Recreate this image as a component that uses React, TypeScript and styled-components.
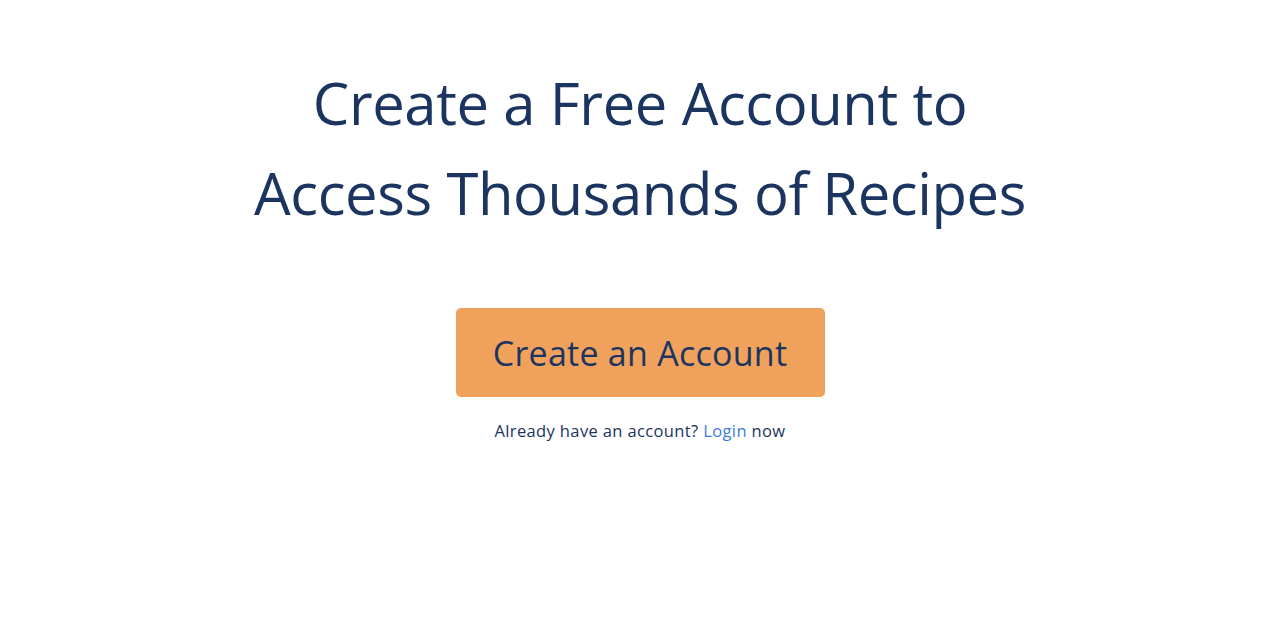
import React from "react";
import styled, { createGlobalStyle } from "styled-components";

const Global = createGlobalStyle`
  html, body { margin: 0; padding: 0; background: #ffffff; }
  body { font-family: "Open Sans", "Noto Sans", sans-serif; }
`;

const Page = styled.main`
  display: flex;
  flex-direction: column;
  align-items: center;
  padding-top: 58px;
  width: 1280px;
  height: 640px;
  box-sizing: border-box;
`;

const Heading = styled.h1`
  margin: 0;
  font-family: "Open Sans", sans-serif;
  font-weight: 400;
  font-size: 58px;
  line-height: 90px;
  color: #1b3560;
  text-align: center;
  letter-spacing: -0.4px;
`;

const CtaButton = styled.button`
  margin-top: 70px;
  width: 369px;
  height: 89px;
  border: none;
  border-radius: 5px;
  background: #f0a15b;
  color: #1b3560;
  font-family: "Open Sans", sans-serif;
  font-size: 34px;
  font-weight: 400;
  letter-spacing: 0.25px;
  cursor: pointer;
`;

const Note = styled.p`
  margin: 22px 0 0;
  font-family: "Open Sans", sans-serif;
  font-size: 16.5px;
  line-height: 24px;
  letter-spacing: 0.37px;
  color: #1b3560;
`;

const Link = styled.a`
  color: #3b7ddd;
  text-decoration: none;
`;

export default function App() {
  return (
    <>
      <Global />
      <Page>
        <Heading>
          Create a Free Account to
          <br />
          Access Thousands of Recipes
        </Heading>
        <CtaButton>Create an Account</CtaButton>
        <Note>
          Already have an account? <Link href="#">Login</Link> now
        </Note>
      </Page>
    </>
  );
}
